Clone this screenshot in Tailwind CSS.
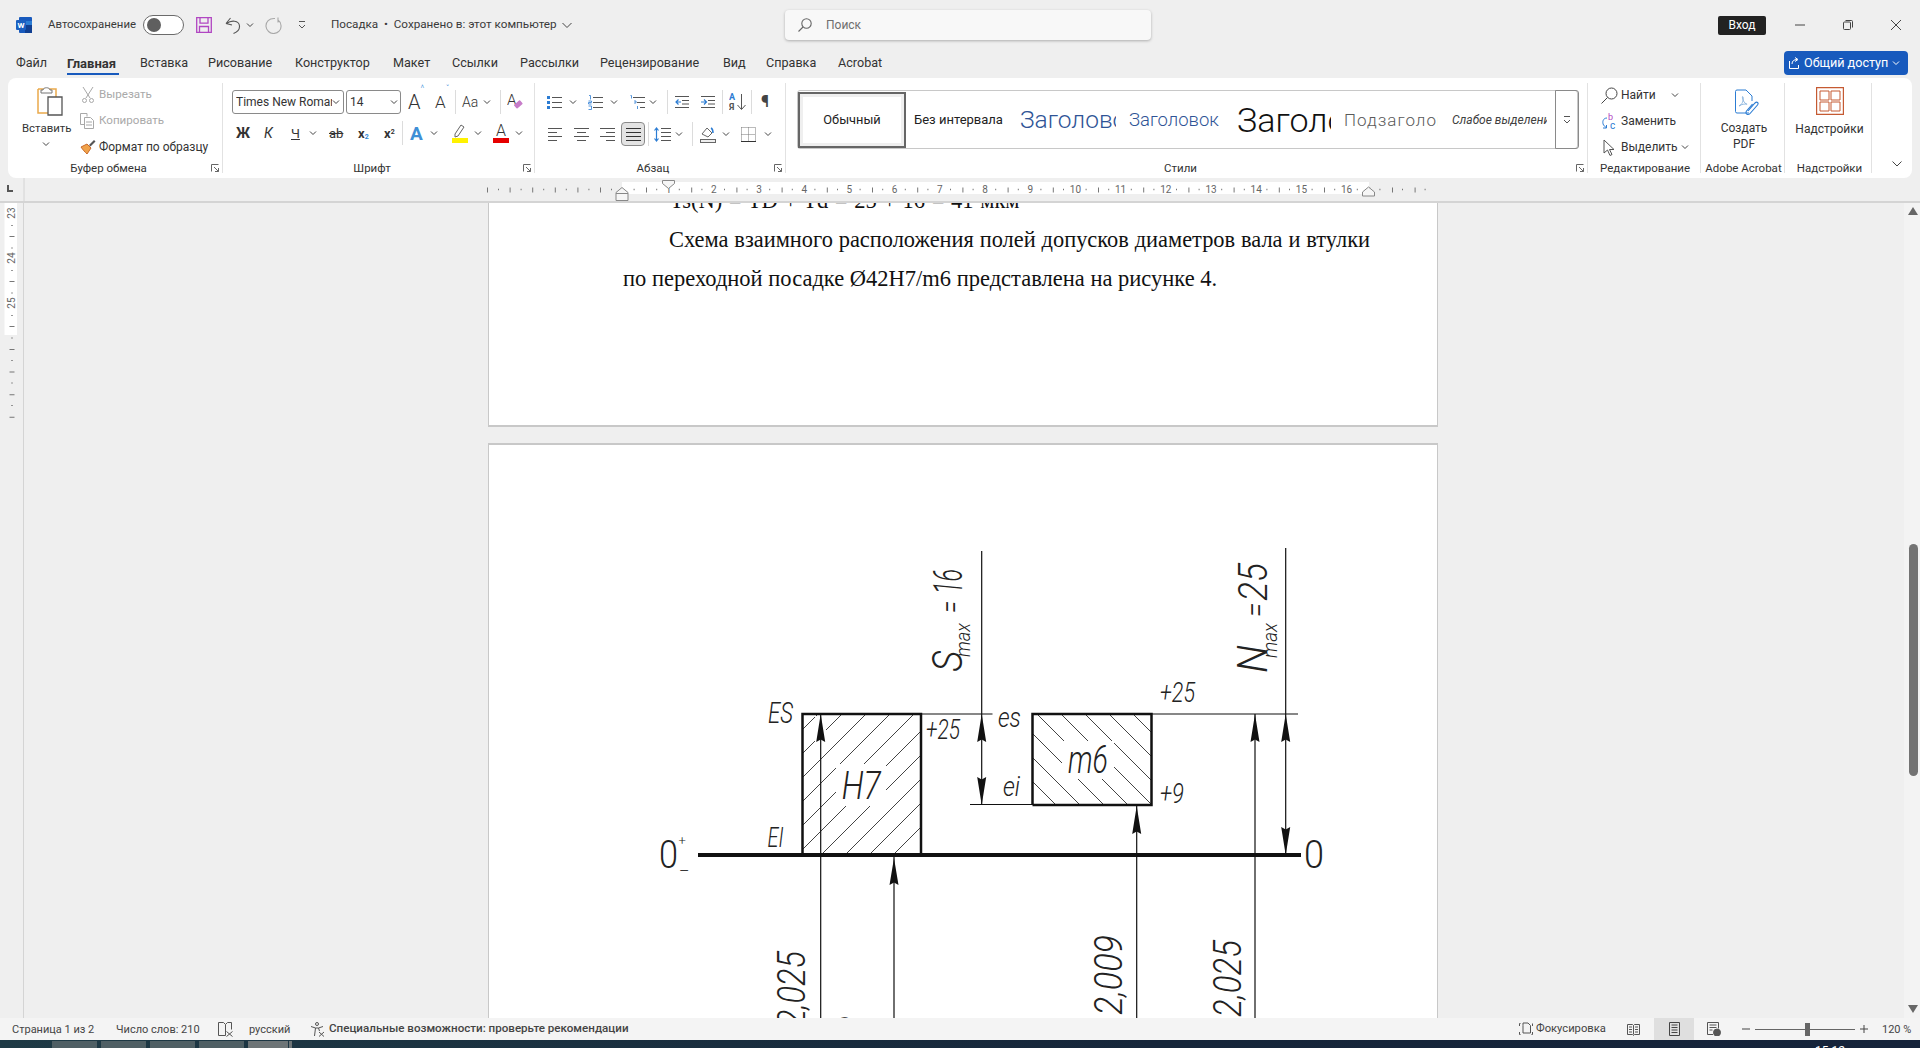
<!DOCTYPE html>
<html lang="ru">
<head>
<meta charset="utf-8">
<title>Посадка</title>
<script src="https://cdn.jsdelivr.net/npm/@tailwindcss/browser@4"></script>
</head>
<body class="m-0 overflow-hidden bg-[#efefef]">
<div class="w-[1920px] h-[1048px] flex flex-col overflow-hidden bg-[#efefef] text-[#3a3a3a] font-['Roboto',sans-serif] text-[12px] leading-none">

  <!-- title bar -->
  <div class="h-[50px] flex items-center shrink-0">
    <svg class="ml-[16px] w-[16px] h-[16px]" viewBox="0 0 16 16"><rect x="3" y="0" width="13" height="16" rx="1" fill="#185abd"/><rect x="9" y="4" width="7" height="4" fill="#2b7cd3"/><rect x="9" y="8" width="7" height="8" fill="#103f91"/><rect x="0" y="3" width="10" height="10" rx="1" fill="#1a5fc0"/><text x="5" y="11" text-anchor="middle" font-size="8" font-weight="700" fill="#fff" font-family="Roboto">W</text></svg>
    <span class="ml-[16px] w-[95px] whitespace-nowrap text-[11.4px]">Автосохранение</span>
    <div class="w-[41px] h-[20px] rounded-full border border-[#6b6b6b] bg-white flex items-center pl-[3px]"><div class="w-[14px] h-[14px] rounded-full bg-[#5f5f5f]"></div></div>
    <svg class="ml-[12px] w-[16px] h-[16px]" viewBox="0 0 16 16" fill="none" stroke="#b146c2" stroke-width="1.3"><path d="M.7.7h14.6v14.6H.7z"/><path d="M4 .7v5.5h8V.7M3.5 15.3V9.5h9v5.8" /></svg>
    <svg class="ml-[13px] w-[16px] h-[17px]" viewBox="0 0 16 17" fill="none" stroke="#555" stroke-width="1.1"><path d="M1 6.5L5.5 1M1 6.5l6 1.5M1.5 6.5C6 3 14 3 14.5 9c.2 3-2 6-6 7.5"/></svg>
    <svg class="ml-[5px] w-[8px] h-[8px]" viewBox="0 0 8 8"><path d="M1 2.5l3 3 3-3" fill="none" stroke="#444"/></svg>
    <svg class="ml-[11px] w-[17px] h-[17px]" viewBox="0 0 17 17" fill="none" stroke="#a8a8a8" stroke-width="1.1"><path d="M10 1.5C4 1 .7 5 1 9.5c.3 4 4 7 7.500 7 4.500 0 8-3.500 7.500-8-.2-2.500-1.500-4.500-3-5.500M13 .5v5"/></svg>
    <svg class="ml-[16px] w-[8px] h-[10px]" viewBox="0 0 8 10" fill="none" stroke="#555"><path d="M1 1.500h6M1 5l3 3 3-3"/></svg>
    <span class="ml-[25px] w-[231px] whitespace-nowrap text-[11.7px]">Посадка&nbsp; •&nbsp; Сохранено в: этот компьютер</span>
    <svg class="w-[10px] h-[10px]" viewBox="0 0 10 10"><path d="M.5 3l4.500 4.500L9.500 3" fill="none" stroke="#444"/></svg>
    <div class="ml-[213px] w-[366px] h-[30px] rounded-[4px] bg-[#f8f8f8] shadow-[0_1px_3px_rgba(0,0,0,.28)] flex items-center">
      <svg class="ml-[13px] w-[14px] h-[14px]" viewBox="0 0 14 14" fill="none" stroke="#666" stroke-width="1.1"><circle cx="8.500" cy="5.500" r="4.700"/><path d="M5 9l-4.500 4.500"/></svg>
      <span class="ml-[14px] text-[#6e6e6e]">Поиск</span>
    </div>
    <div class="ml-[567px] w-[48px] h-[19px] rounded-[2px] bg-[#222] text-white flex items-center justify-center">Вход</div>
    <svg class="ml-[29px] w-[10px] h-[10px]" viewBox="0 0 10 10"><path d="M0 5h10" stroke="#444"/></svg>
    <svg class="ml-[38px] w-[10px] h-[10px]" viewBox="0 0 10 10" fill="none" stroke="#444"><rect x=".5" y="2" width="7" height="7.500" rx="1"/><path d="M2.500.5h6a1 1 0 0 1 1 1v6"/></svg>
    <svg class="ml-[38px] w-[10px] h-[10px]" viewBox="0 0 10 10"><path d="M0 0l10 10M10 0L0 10" stroke="#444"/></svg>
  </div>

  <!-- tabs -->
  <div class="h-[28px] flex shrink-0 items-start pl-[16px] relative text-[12.6px] text-[#333]">
    <span class="w-[51px] h-[26px] flex items-center whitespace-nowrap">Файл</span>
    <span class="w-[73px] h-[26px] flex items-center whitespace-nowrap font-bold text-[13px]">Главная</span>
    <span class="w-[68px] h-[26px] flex items-center whitespace-nowrap">Вставка</span>
    <span class="w-[87px] h-[26px] flex items-center whitespace-nowrap">Рисование</span>
    <span class="w-[98px] h-[26px] flex items-center whitespace-nowrap">Конструктор</span>
    <span class="w-[59px] h-[26px] flex items-center whitespace-nowrap">Макет</span>
    <span class="w-[68px] h-[26px] flex items-center whitespace-nowrap">Ссылки</span>
    <span class="w-[80px] h-[26px] flex items-center whitespace-nowrap">Рассылки</span>
    <span class="w-[123px] h-[26px] flex items-center whitespace-nowrap">Рецензирование</span>
    <span class="w-[43px] h-[26px] flex items-center whitespace-nowrap">Вид</span>
    <span class="w-[72px] h-[26px] flex items-center whitespace-nowrap">Справка</span>
    <span class="w-[50px] h-[26px] flex items-center whitespace-nowrap">Acrobat</span>
    <div class="absolute left-[67px] top-[23px] w-[52px] h-[2px] bg-[#185abd]"></div>
    <div class="ml-[896px] w-[124px] h-[24px] mt-[1px] rounded-[4px] bg-[#185abd] text-white flex items-center pl-[5px]">
      <svg class="w-[12px] h-[12px]" viewBox="0 0 12 12" fill="none" stroke="#fff"><path d="M.5 4v7.500h9V8M3 7c0-3 2-4.500 5-4.500M6 .5l3 2-3 2" /></svg>
      <span class="ml-[3px] whitespace-nowrap">Общий доступ</span>
      <svg class="ml-[4px] w-[8px] h-[8px]" viewBox="0 0 8 8"><path d="M1 2.500l3 3 3-3" fill="none" stroke="#fff"/></svg>
    </div>
  </div>

  <!-- ribbon -->
  <div class="mx-[8px] h-[100px] shrink-0 bg-white rounded-[8px] flex text-[12px] text-[#333]">

    <!-- clipboard -->
    <div class="w-[215px] my-[5px] border-r border-[#e2e2e2] flex flex-col relative">
      <div class="flex-1 flex">
        <div class="w-[72px] pl-[14px] flex flex-col items-start">
          <svg class="ml-[13px] mt-[3px] w-[28px] h-[30px]" viewBox="0 0 28 30" fill="none"><path d="M3 3h18v8M3 3v24h10" stroke="#eaa94b" stroke-width="1.500"/><path d="M8 4c0-3 7-3 7 0h2v3H6V4z" fill="#fff" stroke="#777"/><path d="M13 11h14v18H13z" fill="#fff" stroke="#555" stroke-width="1.300"/></svg>
          <span class="mt-[7px] whitespace-nowrap text-[11.4px]">Вставить</span>
          <svg class="ml-[20px] mt-[6px] w-[8px] h-[8px]" viewBox="0 0 8 8"><path d="M1 2.500l3 3 3-3" fill="none" stroke="#444"/></svg>
        </div>
        <div class="flex flex-col -mt-[1px] text-[#a9a9a9] text-[11.6px]">
          <div class="h-[26px] flex items-center"><svg class="w-[12px] h-[16px] ml-[2px]" viewBox="0 0 12 16" fill="none" stroke="#a8a8a8"><path d="M1 0l7 11M11 0L4 11"/><circle cx="2.500" cy="13.500" r="2"/><circle cx="9.500" cy="13.500" r="2"/></svg><span class="ml-[5px]">Вырезать</span></div>
          <div class="h-[26px] flex items-center"><svg class="w-[14px] h-[16px]" viewBox="0 0 14 16" fill="none" stroke="#a8a8a8"><path d="M.5.5H7v3M.5.5v11H4M4.500 4.500h6l3 3v8h-9z"/><path d="M6 9h6M6 12h6"/></svg><span class="ml-[5px]">Копировать</span></div>
          <div class="h-[26px] flex items-center text-[#333]"><svg class="w-[16px] h-[16px]" viewBox="0 0 16 16"><path d="M1 8l6-3 4 4-4 6C5 13 3 11 1 8z" fill="#f0a24a" stroke="#c96a2a"/><path d="M9 6l5-5 1.500 1.500-5 5z" fill="#555"/></svg><span class="ml-[3px] whitespace-nowrap text-[12px]">Формат по образцу</span></div>
        </div>
      </div>
      <div class="h-[10px] leading-[11px] text-center text-[11.5px] pr-[13px]">Буфер обмена</div>
      <svg class="absolute right-[3px] bottom-[1px] w-[8px] h-[8px]" viewBox="0 0 8 8" fill="none" stroke="#666"><path d="M.5 7.500v-7h7M3 3l4.500 4.500M7.500 4v3.500H4"/></svg>
    </div>

    <!-- font -->
    <div class="w-[312px] my-[5px] border-r border-[#e2e2e2] flex flex-col relative">
      <div class="flex-1 flex flex-col">
        <div class="mt-[7px] h-[24px] flex items-center pl-[9px]">
          <div class="w-[112px] h-[24px] border border-[#8a8a8a] rounded-[3px] flex items-center pl-[3px] overflow-hidden"><span class="w-[96px] overflow-hidden whitespace-nowrap">Times New Roman</span><svg class="w-[8px] h-[8px]" viewBox="0 0 8 8"><path d="M1 2.500l3 3 3-3" fill="none" stroke="#444"/></svg></div>
          <div class="ml-[2px] w-[55px] h-[24px] border border-[#8a8a8a] rounded-[3px] flex items-center pl-[3px]"><span class="w-[40px]">14</span><svg class="w-[8px] h-[8px]" viewBox="0 0 8 8"><path d="M1 2.500l3 3 3-3" fill="none" stroke="#444"/></svg></div>
          <span class="ml-[7px] w-[15px] whitespace-nowrap text-[20px] font-light">A<sup class="text-[9px] text-[#2b88d8] align-top">^</sup></span>
          <span class="ml-[12px] w-[14px] whitespace-nowrap text-[17px] font-light">A<sup class="text-[9px] text-[#2b88d8] align-top">ˇ</sup></span>
          <div class="ml-[6px] w-px h-[24px] bg-[#dcdcdc]"></div>
          <span class="ml-[6px] w-[17px] text-[14px] font-light">Aa</span>
          <svg class="ml-[4px] w-[8px] h-[8px]" viewBox="0 0 8 8"><path d="M1 2.500l3 3 3-3" fill="none" stroke="#444"/></svg>
          <div class="ml-[9px] w-px h-[24px] bg-[#dcdcdc]"></div>
          <svg class="ml-[6px] w-[16px] h-[18px]" viewBox="0 0 16 18"><text x="0" y="12" font-size="15" font-weight="300" fill="#333" font-family="Roboto">A</text><rect x="7" y="9" width="8" height="5" rx="1" transform="rotate(-40 11 11)" fill="#c77dc9"/></svg>
        </div>
        <div class="mt-[8px] h-[22px] flex items-center pl-[13px]">
          <span class="w-[14px] text-[14px] font-bold text-[#333]">Ж</span>
          <span class="ml-[14px] w-[8px] text-[14px] italic">К</span>
          <span class="ml-[19px] w-[8px] text-[13px] underline">Ч</span>
          <svg class="ml-[10px] w-[8px] h-[8px]" viewBox="0 0 8 8"><path d="M1 2.500l3 3 3-3" fill="none" stroke="#444"/></svg>
          <span class="ml-[12px] w-[15px] text-[13px] line-through">ab</span>
          <span class="ml-[14px] w-[11px] text-[13px] font-bold">x<sub class="text-[7px] text-[#2b88d8]">2</sub></span>
          <span class="ml-[15px] w-[12px] text-[13px] font-bold">x<sup class="text-[7px]">2</sup></span>
          <div class="ml-[6px] w-px h-[24px] bg-[#dcdcdc]"></div>
          <span class="ml-[7px] w-[15px] text-[19px] font-bold text-[#3f8fd6]">A</span>
          <svg class="ml-[5px] w-[8px] h-[8px]" viewBox="0 0 8 8"><path d="M1 2.500l3 3 3-3" fill="none" stroke="#444"/></svg>
          <svg class="ml-[14px] w-[16px] h-[20px]" viewBox="0 0 16 20"><path d="M3 11l6-9 3 2-6 9-3 1z" fill="none" stroke="#666"/><rect y="15" width="16" height="5" fill="#fff200"/></svg>
          <svg class="ml-[6px] w-[8px] h-[8px]" viewBox="0 0 8 8"><path d="M1 2.500l3 3 3-3" fill="none" stroke="#444"/></svg>
          <svg class="ml-[11px] w-[16px] h-[20px]" viewBox="0 0 16 20"><text x="8" y="13" text-anchor="middle" font-size="16" font-weight="300" fill="#333" font-family="Roboto">A</text><rect y="15" width="16" height="5" fill="#e60000"/></svg>
          <svg class="ml-[6px] w-[8px] h-[8px]" viewBox="0 0 8 8"><path d="M1 2.500l3 3 3-3" fill="none" stroke="#444"/></svg>
        </div>
      </div>
      <div class="h-[10px] leading-[11px] text-center text-[11.5px] pr-[13px]">Шрифт</div>
      <svg class="absolute right-[3px] bottom-[1px] w-[8px] h-[8px]" viewBox="0 0 8 8" fill="none" stroke="#666"><path d="M.5 7.500v-7h7M3 3l4.500 4.500M7.500 4v3.500H4"/></svg>
    </div>

    <!-- paragraph -->
    <div class="w-[251px] my-[5px] border-r border-[#e2e2e2] flex flex-col relative">
      <div class="flex-1 flex flex-col">
        <div class="mt-[7px] h-[24px] flex items-center pl-[12px]">
          <svg class="w-[15px] h-[15px]" viewBox="0 0 15 15" fill="none" stroke="#555"><path d="M5 2.500h10M5 7.500h10M5 12.500h10"/><path d="M0 1h3v3H0zM0 6h3v3H0zM0 11h3v3H0z" fill="#2b7cd3" stroke="none"/></svg>
          <svg class="ml-[7px] w-[8px] h-[8px]" viewBox="0 0 8 8"><path d="M1 2.500l3 3 3-3" fill="none" stroke="#444"/></svg>
          <svg class="ml-[11px] w-[15px] h-[15px]" viewBox="0 0 15 15" fill="none" stroke="#555"><path d="M5 2.500h10M5 7.500h10M5 12.500h10"/><path d="M1 .5h1.500v4M.5 6h3v1.500h-3V9h3M.5 11h3v3.500h-3" stroke="#2b7cd3" stroke-width=".8"/></svg>
          <svg class="ml-[7px] w-[8px] h-[8px]" viewBox="0 0 8 8"><path d="M1 2.500l3 3 3-3" fill="none" stroke="#444"/></svg>
          <svg class="ml-[12px] w-[15px] h-[15px]" viewBox="0 0 15 15" fill="none" stroke="#555"><path d="M3 2.500h12M7 7.500h8M10 12.500h5"/><path d="M.5.500h1v3M4 6h2v2H4M7.500 11v3" stroke="#2b7cd3" stroke-width=".8"/></svg>
          <svg class="ml-[4px] w-[8px] h-[8px]" viewBox="0 0 8 8"><path d="M1 2.500l3 3 3-3" fill="none" stroke="#444"/></svg>
          <div class="ml-[10px] w-px h-[24px] bg-[#dcdcdc]"></div>
          <svg class="ml-[7px] w-[14px] h-[14px]" viewBox="0 0 14 14" fill="none" stroke="#555"><path d="M0 1.500h14M7 5.500h7M7 9h7M0 12.500h14"/><path d="M6 7H1M3.500 4.500L1 7l2.500 2.500" stroke="#2b7cd3" stroke-width="1.200"/></svg>
          <svg class="ml-[12px] w-[14px] h-[14px]" viewBox="0 0 14 14" fill="none" stroke="#555"><path d="M0 1.500h14M7 5.500h7M7 9h7M0 12.500h14"/><path d="M0 7h5M3 4.500L5.500 7 3 9.500" stroke="#2b7cd3" stroke-width="1.200"/></svg>
          <div class="ml-[7px] w-px h-[24px] bg-[#dcdcdc]"></div>
          <svg class="ml-[6px] w-[17px] h-[18px]" viewBox="0 0 17 18"><text x="0" y="7" font-size="9" font-weight="700" fill="#2b7cd3" font-family="Roboto">A</text><text x="0" y="17" font-size="9" font-weight="700" fill="#555" font-family="Roboto">Я</text><path d="M12.500 1v15M8.500 12l4 4.500 4-4.500" fill="none" stroke="#555"/></svg>
          <div class="ml-[5px] w-px h-[24px] bg-[#dcdcdc]"></div>
          <span class="ml-[9px] w-[10px] text-[16px] font-bold text-[#444]">¶</span>
        </div>
        <div class="mt-[8px] h-[24px] flex items-center pl-[13px]">
          <svg class="w-[14px] h-[13px]" viewBox="0 0 14 13" fill="none" stroke="#555"><path d="M0 .5h14M0 4.500h9M0 8.500h14M0 12.500h9"/></svg>
          <svg class="ml-[12px] w-[15px] h-[13px]" viewBox="0 0 15 13" fill="none" stroke="#555"><path d="M0 .5h15M3 4.500h9M0 8.500h15M3 12.500h9"/></svg>
          <svg class="ml-[11px] w-[15px] h-[13px]" viewBox="0 0 15 13" fill="none" stroke="#555"><path d="M0 .5h15M6 4.500h9M0 8.500h15M6 12.500h9"/></svg>
          <div class="ml-[6px] w-[24px] h-[24px] rounded-[4px] bg-[#e3e3e3] border border-[#8a8a8a] flex items-center justify-center"><svg class="w-[15px] h-[13px]" viewBox="0 0 15 13" fill="none" stroke="#333"><path d="M0 .5h15M0 4.500h15M0 8.500h15M0 12.500h15"/></svg></div>
          <div class="ml-[3px] w-px h-[24px] bg-[#dcdcdc]"></div>
          <svg class="ml-[5px] w-[17px] h-[15px]" viewBox="0 0 17 15" fill="none" stroke="#555"><path d="M7 1.500h10M7 5.500h10M7 9.500h10M7 13.500h10"/><path d="M2.500 1v13M.5 3.500l2-2.500 2 2.500M.5 11.500l2 2.500 2-2.500" stroke="#2b7cd3" stroke-width="1.200"/></svg>
          <svg class="ml-[4px] w-[8px] h-[8px]" viewBox="0 0 8 8"><path d="M1 2.500l3 3 3-3" fill="none" stroke="#444"/></svg>
          <div class="ml-[9px] w-px h-[24px] bg-[#dcdcdc]"></div>
          <svg class="ml-[7px] w-[16px] h-[18px]" viewBox="0 0 16 18" fill="none" stroke="#666"><path d="M2 9l5-6 5 5-4 4z"/><path d="M11 3c2 1 2 3 2 5" stroke="#2b7cd3" stroke-width="1.500"/><rect x=".5" y="14.500" width="15" height="3" fill="#eee"/></svg>
          <svg class="ml-[6px] w-[8px] h-[8px]" viewBox="0 0 8 8"><path d="M1 2.500l3 3 3-3" fill="none" stroke="#444"/></svg>
          <svg class="ml-[11px] w-[15px] h-[15px]" viewBox="0 0 15 15" fill="none"><path d="M.5.500h14v14M.5.500v14M7.500.500v14M.5 7.500h14" stroke="#777" stroke-dasharray="1 1"/><path d="M0 14.500h15" stroke="#333"/></svg>
          <svg class="ml-[8px] w-[8px] h-[8px]" viewBox="0 0 8 8"><path d="M1 2.500l3 3 3-3" fill="none" stroke="#444"/></svg>
        </div>
      </div>
      <div class="h-[10px] leading-[11px] text-center text-[11.5px] pr-[14px]">Абзац</div>
      <svg class="absolute right-[3px] bottom-[1px] w-[8px] h-[8px]" viewBox="0 0 8 8" fill="none" stroke="#666"><path d="M.5 7.500v-7h7M3 3l4.500 4.500M7.500 4v3.500H4"/></svg>
    </div>

    <!-- styles -->
    <div class="w-[802px] my-[5px] border-r border-[#e2e2e2] flex flex-col relative">
      <div class="flex-1">
        <div class="ml-[11px] mt-[7px] w-[781px] h-[59px] border border-[#c8c8c8] rounded-[3px] flex items-center whitespace-nowrap">
          <div class="w-[108px] h-[56px] border-2 border-[#666] bg-white shadow-[inset_0_0_0_3px_#efefef] flex items-center justify-center pt-[2px] text-[12.8px] shrink-0 text-[#222]">Обычный</div>
          <div class="w-[114px] pl-[8px] shrink-0 text-[#222] text-[13px]">Без интервала</div>
          <div class="w-[96px] overflow-hidden shrink-0 text-[24.5px] leading-[34px] font-light text-[#2f5496]">Заголовок 1</div>
          <div class="w-[121px] pl-[13px] shrink-0 text-[18.5px] leading-[24px] font-light text-[#2f5496]">Заголовок</div>
          <div class="w-[94px] overflow-hidden shrink-0 text-[34px] leading-[44px] font-light text-[#111]">Заголовок</div>
          <div class="w-[107px] pl-[13px] overflow-hidden shrink-0 text-[17px] leading-[24px] tracking-[1px] font-light text-[#5a5a5a]">Подзаголовок</div>
          <div class="ml-[14px] w-[95px] overflow-hidden shrink-0 italic text-[#404040]">Слабое выделение</div>
          <div class="ml-[8px] w-[24px] h-[59px] border border-[#8a8a8a] rounded-r-[3px] flex items-center justify-center shrink-0"><svg class="w-[8px] h-[10px]" viewBox="0 0 8 10" fill="none" stroke="#555"><path d="M1 1.500h6M1 5l3 3 3-3"/></svg></div>
        </div>
      </div>
      <div class="h-[10px] leading-[11px] text-center text-[11.5px] pr-[12px]">Стили</div>
      <svg class="absolute right-[3px] bottom-[1px] w-[8px] h-[8px]" viewBox="0 0 8 8" fill="none" stroke="#666"><path d="M.5 7.500v-7h7M3 3l4.500 4.500M7.500 4v3.500H4"/></svg>
    </div>

    <!-- editing -->
    <div class="w-[113px] my-[5px] border-r border-[#e2e2e2] flex flex-col">
      <div class="flex-1 flex flex-col pl-[13px] -mt-[1px]">
        <div class="h-[26px] flex items-center"><svg class="w-[17px] h-[17px]" viewBox="0 0 17 17" fill="none" stroke="#444"><circle cx="10.500" cy="6.500" r="5.500"/><path d="M6.500 10.500l-6 6"/></svg><span class="ml-[3px] w-[49px]">Найти</span><svg class="ml-[1px] w-[8px] h-[8px]" viewBox="0 0 8 8"><path d="M1 2.500l3 3 3-3" fill="none" stroke="#444"/></svg></div>
        <div class="h-[26px] flex items-center"><svg class="w-[17px] h-[17px]" viewBox="0 0 17 17"><text x="7" y="7" font-size="9" fill="#b146c2" font-family="Roboto">b</text><text x="9" y="16" font-size="10" fill="#2b7cd3" font-family="Roboto">c</text><path d="M6 5C2 5 1 9 2.500 12l3 3M2 15h3.500v-3" fill="none" stroke="#2b7cd3"/></svg><span class="ml-[3px]">Заменить</span></div>
        <div class="h-[26px] flex items-center"><svg class="w-[17px] h-[17px]" viewBox="0 0 17 17" fill="none" stroke="#555"><path d="M3 1v13l3.500-3 2.500 5.500 2-1-2.500-5H13z"/></svg><span class="ml-[3px]">Выделить</span><svg class="ml-[3px] w-[8px] h-[8px]" viewBox="0 0 8 8"><path d="M1 2.500l3 3 3-3" fill="none" stroke="#444"/></svg></div>
      </div>
      <div class="h-[10px] leading-[11px] text-center text-[11.5px] whitespace-nowrap pl-[2px]">Редактирование</div>
    </div>

    <!-- acrobat -->
    <div class="w-[84px] my-[5px] border-r border-[#e2e2e2] flex flex-col">
      <div class="flex-1 flex flex-col items-center pl-[3px]">
        <svg class="mt-[6px] ml-[4px] w-[25px] h-[28px]" viewBox="0 0 25 28" fill="none" stroke="#2b7cd3"><path d="M15 24H3a1.500 1.500 0 0 1-1.500-1.500v-20A1.500 1.500 0 0 1 3 1h9l6 6v5"/><path d="M5 17c3-1 5-6 4-9-1-2-1 3 2 6 2 2 3 1 1 1-3 0-6 1-7 2z" stroke="#7aa9d8" stroke-width=".8"/><path d="M14 22l7-8c2-2 4 0 2.500 2l-7 8c-2 3-6 1-4-2l6-7" stroke-width="1.100"/></svg>
        <span class="mt-[5px]">Создать</span>
        <span class="mt-[4px]">PDF</span>
      </div>
      <div class="h-[10px] leading-[11px] text-center text-[11.5px] whitespace-nowrap pl-[2px]">Adobe Acrobat</div>
    </div>

    <!-- addins -->
    <div class="w-[87px] my-[5px] border-r border-[#e2e2e2] flex flex-col">
      <div class="flex-1 flex flex-col items-center pl-[3px]">
        <svg class="mt-[4px] w-[28px] h-[28px]" viewBox="0 0 28 28" fill="none" stroke="#c55a32" stroke-width="1.200"><path d="M.6.6h26.800v26.800H.6z"/><path d="M4 4h9v9H4zM15 4h9v9h-9zM4 15h9v9H4zM15 15h9v9h-9z" stroke-width="1"/></svg>
        <span class="mt-[8px]">Надстройки</span>
      </div>
      <div class="h-[10px] leading-[11px] text-center text-[11.5px] whitespace-nowrap pl-[3px]">Надстройки</div>
    </div>
    <div class="flex-1 flex items-end justify-center pb-[10px] pl-[9px]"><svg class="w-[10px] h-[8px]" viewBox="0 0 10 8"><path d="M.5 1.500L5 6l4.500-4.500" fill="none" stroke="#444"/></svg></div>
  </div>

  <!-- horizontal ruler -->
  <div class="h-[25px] shrink-0 border-b-2 border-[#d4d4d4] relative">
    <svg class="block w-[1920px] h-[23px]" viewBox="0 178 1920 23">
      <path d="M24 178v23" stroke="#d4d4d4"/>
      <path d="M8 185v6h5" fill="none" stroke="#555" stroke-width="2"/>
      <rect x="622" y="182" width="747" height="12" fill="#fff"/>
      <line x1="487" y1="190" x2="610" y2="190" stroke="#777" stroke-width="5" stroke-dasharray="1 21.600"/>
      <line x1="646" y1="190" x2="1380" y2="190" stroke="#777" stroke-width="5" stroke-dasharray="1 44.200"/>
      <line x1="1392" y1="190" x2="1425" y2="190" stroke="#777" stroke-width="5" stroke-dasharray="1 21.600"/>
      <line x1="498" y1="189.500" x2="1430" y2="189.500" stroke="#777" stroke-width="1.500" stroke-dasharray="1 21.600"/>
      <g font-family="Roboto" font-size="10" fill="#666" text-anchor="middle">
        <rect x="660" y="184" width="16" height="10" fill="#fff"/>
        <text x="668.600" y="193">1</text><text x="713.800" y="193">2</text><text x="759" y="193">3</text><text x="804.200" y="193">4</text><text x="849.400" y="193">5</text><text x="894.600" y="193">6</text><text x="939.800" y="193">7</text><text x="985" y="193">8</text><text x="1030.200" y="193">9</text><text x="1075.400" y="193">10</text><text x="1120.600" y="193">11</text><text x="1165.800" y="193">12</text><text x="1211" y="193">13</text><text x="1256.200" y="193">14</text><text x="1301.400" y="193">15</text><text x="1346.600" y="193">16</text>
      </g>
      <path d="M662.500 180.500h12v3l-6 5-6-5z" fill="#f6f6f6" stroke="#888"/>
      <path d="M622 187.500l6 5v8h-12v-8zM616 193.500h12" fill="#f6f6f6" stroke="#888"/>
      <path d="M1368.500 187l6 5v4h-12v-4z" fill="#f6f6f6" stroke="#888"/>
    </svg>
  </div>

  <!-- document -->
  <div class="flex-1 min-h-0 flex overflow-hidden">
    <div class="w-[24px] shrink-0 border-r border-[#d4d4d4]">
      <svg class="block w-[24px] h-[240px]" viewBox="0 203 24 240">
        <rect x="4.500" y="203" width="12.500" height="132" fill="#fff"/>
        <line x1="12" y1="236" x2="12" y2="340" stroke="#777" stroke-width="5" stroke-dasharray="1 44"/>
        <line x1="12" y1="349" x2="12" y2="418" stroke="#777" stroke-width="5" stroke-dasharray="1 21.600"/>
        <line x1="12" y1="225" x2="12" y2="410" stroke="#777" stroke-width="1.500" stroke-dasharray="1 21.500"/>
        <g font-family="Roboto" font-size="10" fill="#666" text-anchor="middle">
          <text transform="translate(15 213) rotate(-90)">23</text>
          <text transform="translate(15 258) rotate(-90)">24</text>
          <text transform="translate(15 303) rotate(-90)">25</text>
        </g>
      </svg>
    </div>
    <div class="flex-1 pl-[464px]">
      <div class="w-[950px] h-[224px] bg-white border-x border-b-2 border-[#c8c8c8] overflow-hidden">
        <div class="w-[747px] ml-[134px] -mt-[22px] font-['Liberation_Serif',serif] text-[22.5px] leading-[39px] text-[#111]">
          <p class="pl-[47px] [word-spacing:1px]">Ts(N) = TD + Td = 25 + 16 = 41 мкм</p>
          <p class="ml-[46px] w-[701px] text-[22.4px] text-justify [text-align-last:justify]">Схема взаимного расположения полей допусков диаметров вала и втулки</p>
          <p class="whitespace-nowrap">по переходной посадке Ø42H7/m6 представлена на рисунке 4.</p>
        </div>
      </div>
      <div class="mt-[16px] w-[950px] h-[600px] bg-white border-x border-t-2 border-[#c8c8c8] overflow-hidden">
        <svg class="block w-[948px] h-[575px]" viewBox="489 445 948 575">
          <defs>
            <clipPath id="h7"><rect x="803" y="715" width="117" height="139"/></clipPath>
            <clipPath id="m6"><rect x="1033" y="715" width="118" height="89"/></clipPath>
          </defs>
          <g clip-path="url(#h7)" stroke="#444" stroke-width="1" fill="none">
            <path d="M900 632L700 832M924 632L724 832M800 756L850 706M780 800L900 680M760 844L950 654M760 868L950 678M780 872L950 702M790 886L950 726M790 910L950 750M810 914L950 774M820 928L950 798"/>
          </g>
          <rect x="836" y="764" width="50" height="42" fill="#fff"/>
          <rect x="815" y="716" width="11" height="34" fill="#fff"/>
          <g clip-path="url(#m6)" stroke="#444" stroke-width="1" fill="none">
            <path d="M1000 773L1100 873M1000 749L1100 849M1000 725L1100 825M1000 701L1140 841M1000 677L1160 837M1020 673L1170 823M1040 669L1180 809M1060 665L1180 785M1080 661L1180 761"/>
          </g>
          <rect x="1062" y="741" width="52" height="38" fill="#fff"/>
          <g stroke="#111" fill="none">
            <path d="M698 855H1301" stroke-width="4"/>
            <path d="M802.500 855V714H921V855" stroke-width="2.500"/>
            <path d="M1032.500 805V714H1151.500V805H1032.500" stroke-width="2.500"/>
            <path d="M921 714H992.500M970 804.500H1032M1151 714H1298M981.700 551V805M1285.700 548V855M820.700 714V1020M1136.700 805V1020M1255 714V1020M894 857V1020" stroke-width="1.200"/>
          </g>
          <g fill="#111">
            <path d="M820.700 714l4.500 28-4.500-2.500-4.500 2.500z"/>
            <path d="M981.700 714l4.500 28-4.500-2.500-4.500 2.500z"/>
            <path d="M981.700 805l4.500-28-4.500 2.500-4.500-2.500z"/>
            <path d="M1255 714l4.500 28-4.500-2.500-4.500 2.500z"/>
            <path d="M1285.700 714l4.500 28-4.500-2.500-4.500 2.500z"/>
            <path d="M1285.700 855l4.500-28-4.500 2.500-4.500-2.500z"/>
            <path d="M1136.700 806l4.500 28-4.500-2.500-4.500 2.500z"/>
            <path d="M894 858l4.500 27-4.500-2.500-4.500 2.500z"/>
          </g>
          <g font-family="Roboto" font-style="italic" font-weight="300" fill="#222">
            <text x="768" y="722.500" font-size="29" textLength="25" lengthAdjust="spacingAndGlyphs">ES</text>
            <text x="926" y="739" font-size="28" textLength="34" lengthAdjust="spacingAndGlyphs">+25</text>
            <text x="998" y="727" font-size="27" textLength="23" lengthAdjust="spacingAndGlyphs">es</text>
            <text x="1003" y="796" font-size="27" textLength="17" lengthAdjust="spacingAndGlyphs">ei</text>
            <text x="767.600" y="847" font-size="27" textLength="16" lengthAdjust="spacingAndGlyphs">EI</text>
            <text x="841.700" y="799.300" font-size="39" textLength="39" lengthAdjust="spacingAndGlyphs">H7</text>
            <text x="1068" y="773" font-size="39" textLength="40" lengthAdjust="spacingAndGlyphs">m6</text>
            <text x="1160" y="702" font-size="28" textLength="35" lengthAdjust="spacingAndGlyphs">+25</text>
            <text x="1160" y="803" font-size="28" textLength="24" lengthAdjust="spacingAndGlyphs">+9</text>
            <text transform="translate(961.700 671.700) rotate(-90)" font-size="42" textLength="21" lengthAdjust="spacingAndGlyphs">S</text>
            <text transform="translate(970 657) rotate(-90)" font-size="21" textLength="34" lengthAdjust="spacingAndGlyphs">max</text>
            <text transform="translate(961.700 613) rotate(-90)" font-size="34" textLength="12" lengthAdjust="spacingAndGlyphs">=</text>
            <text transform="translate(961.700 594) rotate(-90)" font-size="41" textLength="25" lengthAdjust="spacingAndGlyphs">16</text>
            <text transform="translate(1267 673) rotate(-90)" font-size="42" textLength="28" lengthAdjust="spacingAndGlyphs">N</text>
            <text transform="translate(1277 658) rotate(-90)" font-size="21" textLength="35" lengthAdjust="spacingAndGlyphs">max</text>
            <text transform="translate(1267 617) rotate(-90)" font-size="34" textLength="14" lengthAdjust="spacingAndGlyphs">=</text>
            <text transform="translate(1267 601) rotate(-90)" font-size="41" textLength="38" lengthAdjust="spacingAndGlyphs">25</text>
            <text transform="translate(805 1027) rotate(-90)" font-size="38" textLength="76" lengthAdjust="spacingAndGlyphs">2,025</text>
            <text transform="translate(1122 1015) rotate(-90)" font-size="38" textLength="80" lengthAdjust="spacingAndGlyphs">2,009</text>
            <text transform="translate(1241 1017) rotate(-90)" font-size="38" textLength="77" lengthAdjust="spacingAndGlyphs">2,025</text>
            <text transform="translate(866 1034) rotate(-90)" font-size="38" textLength="18" lengthAdjust="spacingAndGlyphs">2</text>
          </g>
          <g font-family="Roboto" font-weight="300" fill="#222">
            <text x="659" y="868" font-size="39" textLength="19" lengthAdjust="spacingAndGlyphs">0</text>
            <text x="678.500" y="845" font-size="13">+</text>
            <text x="679" y="877" font-size="16">–</text>
            <text x="1304" y="868" font-size="39" textLength="20" lengthAdjust="spacingAndGlyphs">0</text>
          </g>
        </svg>
      </div>
    </div>
    <div class="w-[16px] shrink-0 bg-[#f3f3f3] flex flex-col items-center pl-[2px]">
      <svg class="mt-[4px] w-[10px] h-[8px]" viewBox="0 0 10 8"><path d="M5 0l5 8H0z" fill="#666"/></svg>
      <div class="mt-[329px] w-[9px] h-[232px] rounded-full bg-[#737373]"></div>
      <svg class="mt-[229px] w-[10px] h-[8px]" viewBox="0 0 10 8"><path d="M5 8L0 0h10z" fill="#666"/></svg>
    </div>
  </div>

  <!-- status bar -->
  <div class="h-[22px] shrink-0 bg-[#f4f4f4] flex items-center pl-[12px] text-[11px] text-[#444]">
    <span class="w-[104px] whitespace-nowrap">Страница 1 из 2</span>
    <span class="w-[102px] whitespace-nowrap">Число слов: 210</span>
    <svg class="w-[15px] h-[15px]" viewBox="0 0 15 15" fill="none" stroke="#555"><path d="M.5.500h5l2 2v11h-7zM7.500 2.500l2-2h4v7"/><path d="M8.500 9.500l6 5M14.500 9.500l-6 5"/></svg>
    <span class="ml-[16px] w-[61px] whitespace-nowrap">русский</span>
    <svg class="w-[15px] h-[15px]" viewBox="0 0 15 15" fill="none" stroke="#555"><circle cx="7" cy="2" r="1.500"/><path d="M1 4.500l4.500 1.500h3L13 4.500M5.500 6l-1 8M8.500 6l1 3"/><path d="M9 10l5 4.500M14 10l-5 4.500"/></svg>
    <span class="ml-[4px] w-[1190px] whitespace-nowrap font-medium text-[11.6px]">Специальные возможности: проверьте рекомендации</span>
    <svg class="w-[14px] h-[14px]" viewBox="0 0 14 14" fill="none" stroke="#555"><path d="M4 3.500V1h5l2.500 2.500V11H4z"/><path d="M.5 4V1.500h1M.5 10v2.500h1M13.500 10v2.500h-1M13.500 4V1.500" /></svg>
    <span class="ml-[3px] w-[91px] whitespace-nowrap text-[11.2px]">Фокусировка</span>
    <svg class="w-[13px] h-[13px]" viewBox="0 0 13 13" fill="none" stroke="#555"><path d="M.5 1.500h5l1 1 1-1h5v10h-5l-1 1-1-1h-5zM6.500 2.500v9M2 4h3M2 6.500h3M2 9h3M8 4h3M8 6.500h3M8 9h3"/></svg>
    <div class="ml-[14px] w-[40px] h-[22px] bg-[#dfdfdf] flex items-center justify-center"><svg class="w-[11px] h-[14px]" viewBox="0 0 11 14" fill="none" stroke="#444"><path d="M.5.500h10v13H.5zM2.500 3h6M2.500 5.500h6M2.500 8h6M2.500 10.500h6"/></svg></div>
    <svg class="ml-[13px] w-[14px] h-[14px]" viewBox="0 0 14 14" fill="none" stroke="#555"><path d="M6 12.500H.5V.5h11v6M2.500 3h7M2.500 5.500h7M2.500 8h3"/><circle cx="10" cy="10.500" r="3.500" fill="#555"/></svg>
    <svg class="ml-[21px] w-[8px] h-[8px]" viewBox="0 0 8 8"><path d="M0 4h8" stroke="#444"/></svg>
    <div class="ml-[5px] w-[100px] h-[13px] flex items-center relative"><div class="w-full h-px bg-[#666]"></div><div class="absolute left-[50px] top-0 w-[5px] h-[13px] bg-[#666]"></div></div>
    <svg class="ml-[5px] w-[8px] h-[8px]" viewBox="0 0 8 8"><path d="M0 4h8M4 0v8" stroke="#444"/></svg>
    <span class="ml-[14px] whitespace-nowrap">120 %</span>
  </div>

  <!-- task bar -->
  <div class="h-[8px] shrink-0 bg-[linear-gradient(90deg,#1e3a45,#16263a_60%,#15233a)] flex items-start pl-[52px] pt-[1px] relative overflow-hidden">
    <div class="w-[45px] h-[7px] bg-[#4f5f64]"></div>
    <div class="ml-[4px] w-[45px] h-[7px] bg-[#4f5f64]"></div>
    <div class="ml-[4px] w-[45px] h-[7px] bg-[#4f5f64]"></div>
    <div class="ml-[4px] w-[45px] h-[7px] bg-[#4f5f64]"></div>
    <div class="ml-[4px] w-[40px] h-[7px] bg-[#6d7476]"></div>
    <div class="ml-[1px] w-[3px] h-[7px] bg-[#6d7476]"></div>
    <span class="absolute left-[1815px] top-[5px] text-[12px] text-white">15:12</span>
  </div>
</div>
</body>
</html>
